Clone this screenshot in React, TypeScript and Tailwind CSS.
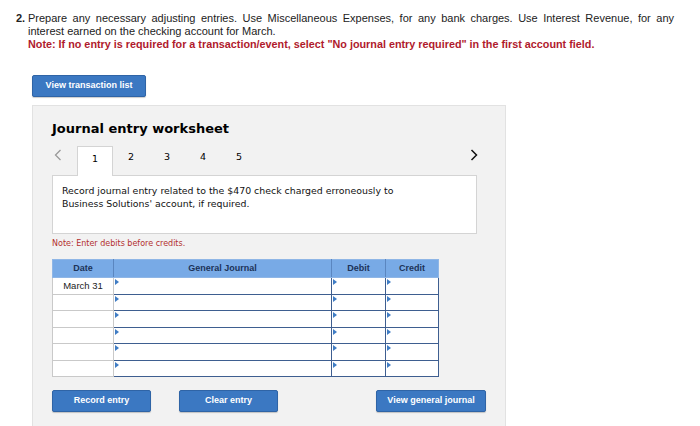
import React from 'react';

const rows = ['March 31', '', '', '', '', ''];

function Marker() {
    return (
        <span className="absolute left-[1px] top-[1px] w-0 h-0 border-y-[3px] border-y-transparent border-l-[4px] border-l-[#3f7cc4]" />
    );
}

function BlueButton({ label, width }: { label: string; width: string }) {
    return (
        <button
            className={`${width} block h-[22px] bg-[#3b78c2] border border-[#2f64a6] rounded-[2px] text-white text-[9px] font-bold shadow-[0_1px_1px_rgba(0,0,0,0.2)]`}
            style={{ fontFamily: '"Liberation Sans", Arial, sans-serif' }}
        >
            {label}
        </button>
    );
}

export default function App() {
    const verdana = { fontFamily: '"DejaVu Sans", Verdana, sans-serif' };

    return (
        <div className="w-[700px] h-[426px] bg-white overflow-hidden relative" style={{ fontFamily: '"Liberation Sans", Arial, sans-serif' }}>
            {/* question text */}
            <div className="flex pl-[16px] pr-[26px] pt-[12px] text-[11px] leading-[12.5px] text-[#222]">
                <span className="w-[12px] font-bold shrink-0">2.</span>
                <div className="flex-1">
                    <p className="text-justify [text-align-last:left]">
                        Prepare any necessary adjusting entries. Use Miscellaneous Expenses, for any bank charges. Use Interest Revenue, for any interest earned on the checking account for March.
                    </p>
                    <p className="mt-[0.5px] font-bold text-[#b01a2c] text-[10.8px] leading-[12.5px]">
                        Note: If no entry is required for a transaction/event, select "No journal entry required" in the first account field.
                    </p>
                </div>
            </div>

            <div className="pl-[32px] mt-[25px]">
                <BlueButton label="View transaction list" width="w-[114px]" />
            </div>

            {/* worksheet panel */}
            <div className="ml-[32px] mt-[8px] w-[474px] h-[330px] bg-[#f2f2f2] border border-[#e2e2e2] pl-[19px] pt-[15px]" style={verdana}>
                <h2 className="text-[13px] font-bold text-black leading-[16px]">Journal entry worksheet</h2>

                <div className="relative mt-[8px] w-[425px]">
                    <div className="flex items-end h-[30px]">
                        <span className="w-[25px] h-full flex items-start pt-[4px] pl-[2px]">
                            <svg width="8" height="12" viewBox="0 0 8 12">
                                <path d="M6.5 1 L1.5 6 L6.5 11" fill="none" stroke="#9a9a9a" strokeWidth="1.3" />
                            </svg>
                        </span>
                        {[1, 2, 3, 4, 5].map((n) => (
                            <span
                                key={n}
                                className={`w-[36px] h-full flex justify-center pt-[5px] text-[9.5px] text-black ${
                                    n === 1 ? 'bg-white border border-b-0 border-[#d4d4d4] relative z-10 -mb-[1px] h-[31px]' : ''
                                }`}
                            >
                                {n}
                            </span>
                        ))}
                        <span className="ml-auto h-full flex items-start pt-[4px] -mr-[1px]">
                            <svg width="8" height="12" viewBox="0 0 8 12">
                                <path d="M1.5 1 L6.5 6 L1.5 11" fill="none" stroke="#111" strokeWidth="1.5" />
                            </svg>
                        </span>
                    </div>

                    <div className="bg-white border border-[#d4d4d4] h-[59px] pl-[9px] pt-[8px] text-[9.4px] leading-[13px] text-[#111]">
                        Record journal entry related to the $470 check charged erroneously to
                        <br />
                        Business Solutions' account, if required.
                    </div>
                </div>

                <p className="mt-[5px] text-[8px] text-[#b3302f] leading-[10px]">Note: Enter debits before credits.</p>

                <table
                    className="mt-[10px] border-collapse w-[386px] table-fixed"
                    style={{ fontFamily: '"Liberation Sans", Arial, sans-serif' }}
                >
                    <colgroup>
                        <col className="w-[61px]" />
                        <col className="w-[218px]" />
                        <col className="w-[54px]" />
                        <col className="w-[53px]" />
                    </colgroup>
                    <thead>
                        <tr className="h-[18px] bg-[#78aae6] text-[9px] font-bold text-[#1c3358]">
                            <th className="border border-[#8fb6e6] border-r-[#5a86c0]">Date</th>
                            <th className="border border-[#8fb6e6] border-x-[#5a86c0]">General Journal</th>
                            <th className="border border-[#8fb6e6] border-x-[#5a86c0]">Debit</th>
                            <th className="border border-[#8fb6e6] border-l-[#5a86c0]">Credit</th>
                        </tr>
                    </thead>
                    <tbody>
                        {rows.map((d, i) => (
                            <tr key={i} className="h-[16.5px]">
                                <td className="border border-[#c9c9c9] bg-white text-center text-[9.5px] text-[#222] leading-[10px]">{d}</td>
                                <td className="relative border-[1.5px] border-[#3e5e90] bg-white"><Marker /></td>
                                <td className="relative border-[1.5px] border-[#3e5e90] bg-white"><Marker /></td>
                                <td className="relative border-[1.5px] border-[#3e5e90] bg-white"><Marker /></td>
                            </tr>
                        ))}
                    </tbody>
                </table>

                <div className="flex items-start mt-[13px] w-[434px]">
                    <BlueButton label="Record entry" width="w-[99px]" />
                    <div className="ml-[28px]">
                        <BlueButton label="Clear entry" width="w-[99px]" />
                    </div>
                    <div className="ml-auto">
                        <BlueButton label="View general journal" width="w-[110px]" />
                    </div>
                </div>
            </div>
        </div>
    );
}
